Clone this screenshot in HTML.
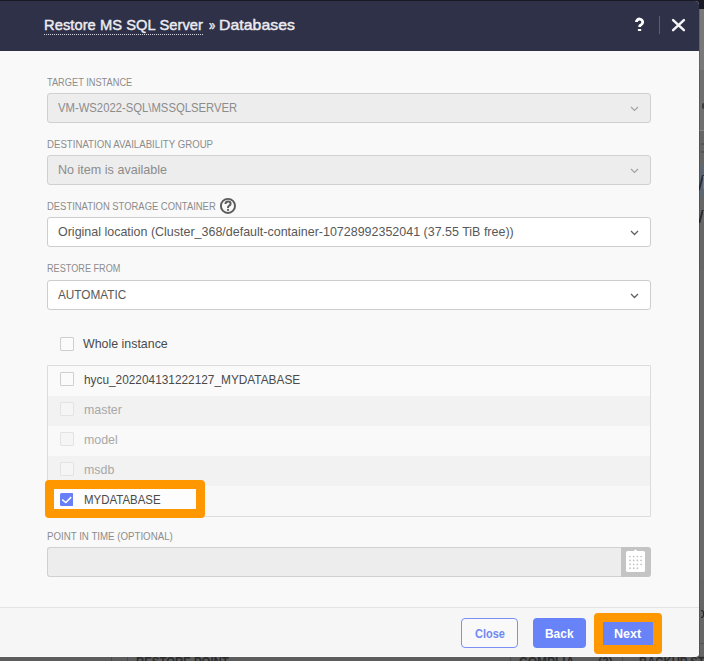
<!DOCTYPE html>
<html><head><meta charset="utf-8">
<style>
*{box-sizing:border-box;margin:0;padding:0}
html,body{width:704px;height:661px;overflow:hidden;background:#666;font-family:"Liberation Sans",sans-serif}
.abs{position:absolute}
.bgtop{position:absolute;left:0;top:0;width:704px;height:9px;background:#181922}
.bgright{position:absolute;left:699px;top:9px;width:5px;height:652px;background:#666}
.bgbottom{position:absolute;left:0;top:656px;width:704px;height:5px;background:#5c5c5c}
.modal{position:absolute;left:-4px;top:1px;width:703px;height:656px;border-radius:4px;overflow:hidden;background:#f9f9f9}
.in{position:absolute;left:4px;top:-1px;width:704px;height:661px}
.hdr{position:absolute;left:-4px;top:1px;width:703px;height:50px;background:#2f3149}
.title{position:absolute;left:44px;top:15px;color:#ececf0;font-size:15px;white-space:pre;line-height:20px;-webkit-text-stroke:0.45px #ececf0;display:inline-block;letter-spacing:0.06px;transform-origin:0 0}
.dots{position:absolute;left:44px;top:34px;width:160px;height:1px;background:repeating-linear-gradient(90deg,#d8d8e0 0 1px,transparent 1px 2px)}
.q{position:absolute;left:634px;top:15px;color:#fff;font-weight:bold;font-size:18px;line-height:20px}
.sep{position:absolute;left:659px;top:16px;width:1px;height:18px;background:#5e5f66}
.x{position:absolute;left:671px;top:18px;width:15px;height:14px}
.lbl{position:absolute;left:47px;font-size:10px;color:#8c8c8c;white-space:pre;line-height:12px;transform-origin:0 0}
.inp{position:absolute;left:47px;width:604px;height:30px;border:1px solid #cdcdcd;border-radius:3px;background:#fff}
.inp.dis{background:#ededed;border-color:#d0d0d0}
.inp .t{position:absolute;left:10px;top:5px;font-size:12.4px;color:#585858;white-space:pre;line-height:18px;transform-origin:0 0}
.inp.dis .t{color:#8c8c8c}
.chev{position:absolute;left:582px;top:12px;width:9px;height:6px}
.cb{position:absolute;left:59.6px;width:14px;height:14px;border:1px solid #cfcfcf;background:#fbfbfb;border-radius:1px}
.cb.dis{border-color:#e3e3e3;background:#f5f5f5}
.ctext{position:absolute;left:83px;font-size:12.4px;color:#4a4a4a;white-space:pre;line-height:18px;transform-origin:0 0}
.ctext.dis{color:#a8a8a8}
.list{position:absolute;left:47px;top:365px;width:604px;height:152px;border:1px solid #dcdcdc;border-radius:1px;background:#fff;overflow:hidden}
.row{position:absolute;left:0;width:602px;height:30px}
.footer{position:absolute;left:-4px;top:607px;width:703px;height:49px;background:#f6f6f6;border-top:1px solid #e4e4e4}
.btn{position:absolute;top:618px;height:30px;border-radius:4px;font-size:13px;text-align:center;line-height:30px;white-space:pre}
.bl{position:absolute;top:627px;font-size:12.5px;font-weight:bold;line-height:14px;white-space:pre;transform-origin:0 0}
</style></head><body>
<div class="bgtop"></div>
<div class="bgright"></div>
<div class="bgbottom"></div>
<div class="abs" style="left:699px;top:9px;width:5px;height:61px;background:#797979"></div>
<div class="abs" style="left:699px;top:70px;width:5px;height:60px;background:#6f6f6f"></div>
<div class="abs" style="left:699px;top:130px;width:5px;height:1px;background:#858585"></div>
<div class="abs" style="left:702px;top:103px;width:2px;height:6px;background:#3a3a3a;border-radius:2px 0 0 2px"></div>
<div class="abs" style="left:701px;top:143px;width:3px;height:2px;background:#555"></div>
<div class="abs" style="left:701px;top:151px;width:3px;height:2px;background:#555"></div>
<div class="abs" style="left:699px;top:165px;width:5px;height:32px;background:#5d6771"></div>
<div class="abs" style="left:700px;top:175px;width:2px;height:15px;background:#2a3040;transform:skewX(-15deg)"></div>
<div class="abs" style="left:703px;top:176px;width:1px;height:13px;background:#8a7a50"></div>
<div class="abs" style="left:700px;top:210px;width:2px;height:13px;background:#2a2a30;transform:skewX(-15deg)"></div>
<div class="abs" style="left:703px;top:211px;width:1px;height:11px;background:#7a6a48"></div>
<div class="abs" style="left:699px;top:270px;width:5px;height:310px;background:#696969"></div>
<div class="abs" style="left:699px;top:580px;width:5px;height:76px;background:#666"></div>
<div class="abs" style="left:699px;top:9px;width:1px;height:648px;background:rgba(0,0,0,0.18)"></div>
<div class="abs" style="left:699px;top:643px;width:5px;height:1px;background:#555"></div>
<div class="abs" style="left:701px;top:610px;width:3px;height:8px;border:1.5px solid #222;border-left:none;border-radius:0 4px 4px 0"></div>
<div class="abs" style="left:111px;top:650px;width:1px;height:11px;background:#4a4a4a"></div>
<div class="abs" style="left:127px;top:650px;width:1px;height:11px;background:#4a4a4a"></div>
<div class="abs" style="left:510px;top:650px;width:1px;height:11px;background:#4a4a4a"></div>
<div class="abs" style="left:622px;top:650px;width:1px;height:11px;background:#4a4a4a"></div>
<div class="abs" style="left:136px;top:655px;font-size:12px;font-weight:bold;line-height:14px;color:#2b2b2b;white-space:pre;transform:scaleX(0.948);transform-origin:0 0">RESTORE POINT</div>
<div class="abs" style="left:519px;top:655px;font-size:12px;font-weight:bold;line-height:14px;color:#2b2b2b;white-space:pre">COMPLIA</div>
<div class="abs" style="left:598px;top:655px;font-size:12px;font-weight:bold;line-height:14px;color:#2b2b2b;white-space:pre">(3)</div>
<div class="abs" style="left:639px;top:655px;font-size:12px;font-weight:bold;line-height:14px;color:#2b2b2b;white-space:pre;transform:scaleX(0.942);transform-origin:0 0">BACKUP ST</div>

<div class="modal"><div class="in">
  <div class="hdr"></div>
  <div class="title" style="transform:scaleX(0.979)">Restore MS SQL Server</div><div class="title" style="left:208.6px;transform:scaleX(0.75)">»</div><div class="title" style="left:218.5px;transform:scaleX(1.052)">Databases</div>
  <div class="dots"></div>
  <svg class="abs" style="left:630px;top:14px" width="20" height="20" viewBox="0 0 20 20"><path d="M6.4 8.0 A3.15 3.15 0 0 1 12.7 8.35 Q12.7 10.0 11.1 10.8 Q9.6 11.5 9.6 12.6 L9.6 12.9" fill="none" stroke="#fff" stroke-width="2.8"/><rect x="7.9" y="15.0" width="3.3" height="2.1" rx="0.4" fill="#fff"/></svg>
  <div class="sep"></div>
  <svg class="x" viewBox="0 0 15 14"><path d="M2.1 2.1 L12.9 12.1 M12.9 2.1 L2.1 12.1" stroke="#f4f4f6" stroke-width="2.5" stroke-linecap="round"/></svg>

  <div class="lbl" style="top:77px;transform:scaleX(0.924)">TARGET INSTANCE</div>
  <div class="inp dis" style="top:93px"><div class="t" style="transform:scaleX(0.911)">VM-WS2022-SQL\MSSQLSERVER</div>
    <svg class="chev" viewBox="0 0 9 6"><path d="M1 1 L4.5 4.5 L8 1" fill="none" stroke="#a3a3a3" stroke-width="1.2"/></svg></div>

  <div class="lbl" style="top:139px;transform:scaleX(0.965)">DESTINATION AVAILABILITY GROUP</div>
  <div class="inp dis" style="top:155px"><div class="t" style="transform:scaleX(1.015)">No item is available</div>
    <svg class="chev" viewBox="0 0 9 6"><path d="M1 1 L4.5 4.5 L8 1" fill="none" stroke="#a3a3a3" stroke-width="1.2"/></svg></div>

  <div class="lbl" style="top:201px;transform:scaleX(0.943)">DESTINATION STORAGE CONTAINER</div>
  <svg class="abs" style="left:219px;top:197px" width="18" height="18" viewBox="0 0 18 18"><circle cx="8.95" cy="8.9" r="7.05" fill="none" stroke="#5c5c5c" stroke-width="1.95"/><path d="M6.5 7.0 Q6.5 4.4 9.0 4.4 Q11.6 4.4 11.6 6.7 Q11.6 8.0 10.2 8.7 Q9.0 9.3 9.0 10.9" fill="none" stroke="#5c5c5c" stroke-width="2"/><circle cx="9.0" cy="12.95" r="1.1" fill="#5c5c5c"/></svg>
  <div class="inp" style="top:217px"><div class="t" style="transform:scaleX(1.007)">Original location (Cluster_368/default-container-10728992352041 (37.55 TiB free))</div>
    <svg class="chev" viewBox="0 0 9 6"><path d="M1 1 L4.5 4.5 L8 1" fill="none" stroke="#606060" stroke-width="1.3"/></svg></div>

  <div class="lbl" style="top:263px;transform:scaleX(0.913)">RESTORE FROM</div>
  <div class="inp" style="top:280px"><div class="t" style="transform:scaleX(0.951)">AUTOMATIC</div>
    <svg class="chev" viewBox="0 0 9 6"><path d="M1 1 L4.5 4.5 L8 1" fill="none" stroke="#606060" stroke-width="1.3"/></svg></div>

  <div class="cb" style="top:337px"></div>
  <div class="ctext" style="top:335px">Whole instance</div>

  <div class="list">
    <div class="row" style="top:0;background:#fafafa"></div>
    <div class="row" style="top:30px;background:#f2f2f2"></div>
    <div class="row" style="top:60px;background:#f9f9f9"></div>
    <div class="row" style="top:90px;background:#f2f2f2"></div>
    <div class="row" style="top:120px;background:#f8f8f8"></div>
  </div>
  <div class="cb" style="top:372px"></div>
  <div class="ctext" style="top:371px;left:84px;transform:scaleX(0.956)">hycu_202204131222127_MYDATABASE</div>
  <div class="cb dis" style="top:402px"></div>
  <div class="ctext dis" style="top:401px;left:84px">master</div>
  <div class="cb dis" style="top:432px"></div>
  <div class="ctext dis" style="top:431px;left:84px">model</div>
  <div class="cb dis" style="top:462px"></div>
  <div class="ctext dis" style="top:461px;left:84px">msdb</div>

  <div class="abs" style="left:45px;top:480px;width:160px;height:38px;border:9px solid #ff9800;border-radius:4px;background:#fdfdfd"></div>
  <svg class="abs" style="left:59.7px;top:493px" width="13.5" height="13" viewBox="0 0 13.5 13"><rect x="0" y="0" width="13.5" height="13" rx="1.6" fill="#6880f7"/><path d="M2.2 6.6 L5.8 9.5 L11.2 4.1" fill="none" stroke="#fff" stroke-width="1.5"/></svg>
  <div class="ctext" style="top:491px;left:83.7px;transform:scaleX(0.925)">MYDATABASE</div>

  <div class="lbl" style="top:531px;transform:scaleX(0.970)">POINT IN TIME (OPTIONAL)</div>
  <div class="inp dis" style="top:547px;width:575px;border-radius:3px 0 0 3px;border-right:none"></div>
  <div class="abs" style="left:621px;top:547px;width:30px;height:30px;background:#c4c4c4;border-radius:0 3px 3px 0">
    <svg class="abs" style="left:4px;top:2px" width="21" height="25" viewBox="0 0 21 25"><path d="M10.5 0.2 L12.3 1.9 L18.3 1.9 Q20 1.9 20 3.6 L20 21.4 Q20 23.1 18.3 23.1 L2.7 23.1 Q1 23.1 1 21.4 L1 3.6 Q1 1.9 2.7 1.9 L8.7 1.9 Z" fill="#fff"/>
      <g fill="#c0c0c0"><circle cx="5" cy="7.5" r=".85"/><circle cx="8.7" cy="7.5" r=".85"/><circle cx="12.4" cy="7.5" r=".85"/><circle cx="16.1" cy="7.5" r=".85"/>
      <circle cx="5" cy="11.4" r=".85"/><circle cx="8.7" cy="11.4" r=".85"/><circle cx="12.4" cy="11.4" r=".85"/><circle cx="16.1" cy="11.4" r=".85"/>
      <circle cx="5" cy="15.3" r=".85"/><circle cx="8.7" cy="15.3" r=".85"/><circle cx="12.4" cy="15.3" r=".85"/><circle cx="16.1" cy="15.3" r=".85"/>
      <circle cx="5" cy="19.2" r=".85"/><circle cx="8.7" cy="19.2" r=".85"/><circle cx="12.4" cy="19.2" r=".85"/></g></svg>
  </div>

  <div class="footer"></div>
  <div class="abs" style="left:461px;top:618px;width:57px;height:30px;background:#f9f9f9;border:1px solid #7b8ff5;border-radius:4px"></div>
  <div class="bl" style="left:475px;color:#7088f3;transform:scaleX(0.876)">Close</div>
  <div class="abs" style="left:533px;top:618px;width:53px;height:30px;background:#6783f7;border-radius:4px"></div>
  <div class="bl" style="left:545px;color:#fff;transform:scaleX(0.955)">Back</div>
  <div class="abs" style="left:594px;top:613px;width:68px;height:41px;background:#ff9800;border-radius:4px"></div>
  <div class="abs" style="left:603px;top:622px;width:50px;height:23px;background:#6783f7"></div>
  <div class="bl" style="left:614px;color:#fff">Next</div>
</div></div>
</body></html>
